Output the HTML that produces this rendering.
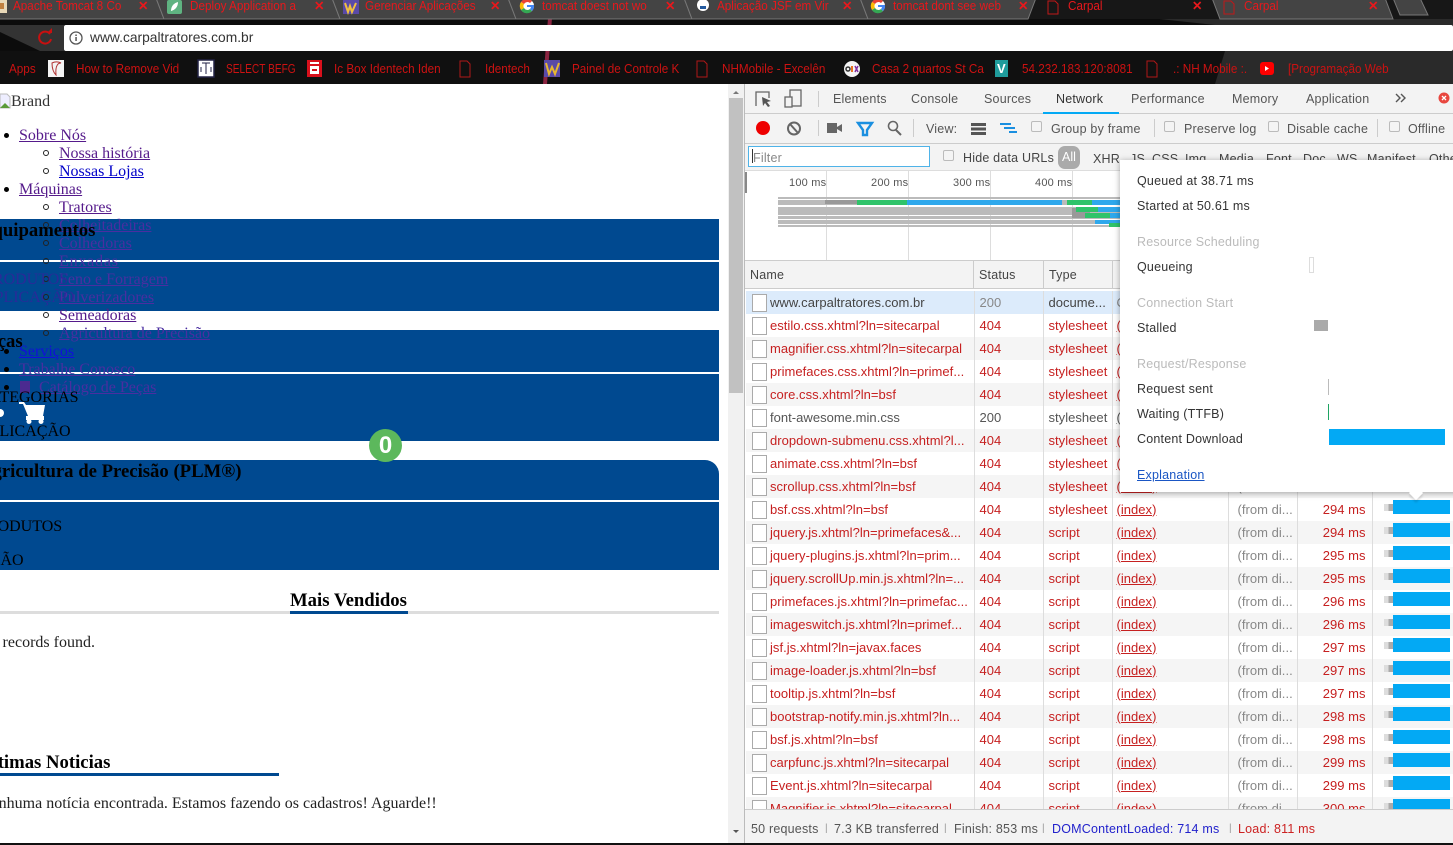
<!DOCTYPE html>
<html lang="pt"><head><meta charset="utf-8"><title>Carpal</title>
<style>
*{box-sizing:border-box}
html,body{margin:0;padding:0;width:1453px;height:845px;overflow:hidden;background:#fff}
body{position:relative;font-family:"Liberation Sans",sans-serif}
.a{position:absolute;white-space:nowrap}
.chrome{font-size:13px;color:#cc1212;line-height:16px;transform:scaleX(.9);transform-origin:left center}
.tab{color:#e8181c}
.x{font-weight:bold;transform:none;font-size:12.5px;color:#e8181c}
.s{font-family:"Liberation Serif",serif;font-size:16px;line-height:18px;color:#000}
.h{font-size:18.72px;line-height:20px;font-weight:bold}
.l{text-decoration:underline;color:#551a8b}
.dim{color:#4a2ea0}
.up{color:#2a2a98}
.band{position:absolute;left:0;width:719px;background:#004990}
.d{position:absolute;width:5px;height:5px;border-radius:50%;background:#000}
.c{position:absolute;width:6px;height:6px;border-radius:50%;border:1px solid #222}
.dt{font-size:12.5px;color:#555;line-height:16px;letter-spacing:.2px}
.cb{position:absolute;width:11px;height:11px;border:1px solid #bbb;border-radius:2px;background:#f4f4f4}
table{position:absolute;left:746px;top:291px;width:707px;border-collapse:collapse;table-layout:fixed;font-size:13px;letter-spacing:.03px;color:#c62020}
td{height:23px;padding:0 0 0 5px;white-space:nowrap;overflow:hidden;border-right:1px solid #ddd;line-height:16px}
tr:nth-child(odd){background:#f5f5f5}
tr:first-child{background:#dcebfb;color:#444}
td:first-child{padding-left:24px;position:relative}
td:first-child:before{content:"";position:absolute;left:6px;top:3px;width:13px;height:16px;border:1px solid #aaa;background:#fff}
td.i{padding-left:4px}
td.z{padding-left:9px}
.u{text-decoration:underline}
.g{color:#888}
td.t{text-align:right;padding-right:6px}
td.w{border-right:0;position:relative}
td.w i{position:absolute;left:11px;top:6px;width:9px;height:7px;background:linear-gradient(90deg,#ddd 50%,#aaa 50%)}
td.w b{position:absolute;left:20px;top:2px;width:57px;height:14px;background:#03a9f4}
.p{position:absolute;font-size:12.5px;letter-spacing:.2px;color:#333;line-height:16px;left:1137px;white-space:nowrap}
.ph{color:#bbb}
</style></head><body>

<!-- browser chrome -->
<svg class="a" style="left:0;top:0" width="1453" height="84">
<rect width="1453" height="84" fill="#0c0c0c"/>
<polygon points="0,25 64,25 64,51 40,51 0,32" fill="#333"/>
<polygon points="0,51 1453,51 1453,84 0,84" fill="#101010"/>
<polygon points="1225,51 1453,51 1453,84 1215,84" fill="#2a2a2a"/>
<polygon points="1150,18 1453,18 1453,25 1215,25" fill="#2a2a2a"/>
<polygon points="548,18 552,18 547,84 543,84" fill="#8a2440"/>
<rect width="1453" height="19" fill="#171717"/>
<g fill="#444" stroke="#777" stroke-width="1">
<polygon points="-20,-2 156,-2 164,19 -12,19"/>
<polygon points="156,-2 332,-2 340,19 164,19"/>
<polygon points="332,-2 508,-2 516,19 340,19"/>
<polygon points="508,-2 684,-2 692,19 516,19"/>
<polygon points="684,-2 860,-2 868,19 692,19"/>
<polygon points="860,-2 1036,-2 1028,19 868,19"/>
<polygon points="1212,-2 1385,-2 1393,19 1220,19"/>
<polygon points="1393,-2 1420,-2 1428,15 1400,15"/>
</g>
<!-- tab icons -->
<rect x="0" y="0" width="7" height="13" fill="#e8d8b8"/><rect x="0" y="3" width="4" height="6" fill="#c08040"/>
<rect x="167" y="0" width="15" height="14" rx="2" fill="#5fb381"/>
<path d="M171 11c0-5 3-8 7-9 0 5-3 8-7 9z" fill="#fff"/>
<rect x="343" y="0" width="16" height="14" fill="#5a4aa8"/><path d="M345 3l3 9 2-6 2 6 4-9" fill="none" stroke="#f0c040" stroke-width="2"/>
<g id="goog"><circle cx="527" cy="6" r="7" fill="#fff"/><path d="M527 -1a7 7 0 0 1 5 2l-2 2a4 4 0 0 0-6 1l-3-2a7 7 0 0 1 6-3z" fill="#ea4335"/><path d="M521 2l3 2a4 4 0 0 0 0 4l-3 2a7 7 0 0 1 0-8z" fill="#fbbc05"/><path d="M521 10l3-2a4 4 0 0 0 6 1l2 2a7 7 0 0 1-11-1z" fill="#34a853"/><path d="M527 5h7a7 7 0 0 1-2 6l-2-2a3 3 0 0 0 1-2h-4z" fill="#4285f4"/></g>
<use href="#goog" x="351"/>
<circle cx="703" cy="5" r="6" fill="#fff"/><rect x="700" y="6" width="6" height="3" fill="#235a9f"/>
<path d="M1048 1h7l3 3v10h-10zM1224 1h7l3 3v10h-10z" fill="none" stroke="#c01818"/>
<!-- reload -->
<path d="M50 34a6 6 0 1 0 1 5" fill="none" stroke="#c81010" stroke-width="2"/><path d="M47 33h5v-5z" fill="#c81010"/>
<!-- address bar -->
<rect x="64" y="25" width="1389" height="26" rx="2" fill="#fff"/>
<circle cx="76" cy="38" r="6" fill="none" stroke="#555" stroke-width="1.3"/><rect x="75.3" y="37" width="1.5" height="4" fill="#555"/><rect x="75.3" y="34.5" width="1.5" height="1.5" fill="#555"/>
<!-- bookmark icons -->
<rect x="48" y="60" width="16" height="17" fill="#f4f4f4"/><path d="M52 63c4-2 7-1 9 0-2 0-6 1-5 12-3-3-4-8-4-12z" fill="none" stroke="#b03030"/>
<rect x="198" y="60" width="16" height="17" fill="#fff" stroke="#224" stroke-width="1.5"/><path d="M202 63h8M206 63v11M201 67v5M211 67v5" stroke="#224" fill="none"/>
<rect x="307" y="60" width="15" height="17" fill="#d8101c"/><rect x="310" y="62" width="9" height="2" fill="#fff"/><rect x="310" y="66" width="9" height="8" fill="#fff"/><rect x="312" y="69" width="5" height="2" fill="#d8101c"/>
<path d="M460 61h7l3 3v13h-10zM1147 61h7l3 3v13h-10zM697 61h7l3 3v13h-10z" fill="none" stroke="#b01818"/>
<rect x="544" y="60" width="16" height="17" fill="#5a4aa8"/><path d="M546 63l3 11 3-7 3 7 4-11" fill="none" stroke="#e8b830" stroke-width="2"/>
<circle cx="852" cy="69" r="8" fill="#f4f4f4"/><circle cx="848" cy="69" r="2" fill="none" stroke="#333" stroke-width="1.5"/><path d="M852 66v6" stroke="#e87020" stroke-width="2"/><path d="M855 66l3 6M858 66l-3 6" stroke="#8030a0" stroke-width="1.5"/>
<rect x="995" y="60" width="13" height="17" fill="#1f9c9c"/>
<rect x="1260" y="62" width="14" height="13" rx="3" fill="#f00"/><path d="M1265 66l4 2.500-4 2.500z" fill="#fff"/>
</svg>
<div class="a chrome tab" style="left:13px;top:-2px">Apache Tomcat 8 Co</div>
<div class="a chrome tab" style="left:190px;top:-2px">Deploy Application a</div>
<div class="a chrome tab" style="left:365px;top:-2px">Gerenciar Aplicações</div>
<div class="a chrome tab" style="left:542px;top:-2px">tomcat doest not wo</div>
<div class="a chrome tab" style="left:717px;top:-2px">Aplicação JSF em Vir</div>
<div class="a chrome tab" style="left:893px;top:-2px">tomcat dont see web</div>
<div class="a chrome tab" style="left:1068px;top:-2px">Carpal</div>
<div class="a chrome tab" style="left:1244px;top:-2px">Carpal</div>
<div class="a chrome x" style="left:138px;top:-2px">✕</div>
<div class="a chrome x" style="left:314px;top:-2px">✕</div>
<div class="a chrome x" style="left:490px;top:-2px">✕</div>
<div class="a chrome x" style="left:665px;top:-2px">✕</div>
<div class="a chrome x" style="left:842px;top:-2px">✕</div>
<div class="a chrome x" style="left:1018px;top:-2px">✕</div>
<div class="a chrome x" style="left:1192px;top:-2px">✕</div>
<div class="a chrome x" style="left:1368px;top:-2px">✕</div>
<div class="a" style="left:90px;top:30px;font-size:13.8px;line-height:16px;color:#333">www.carpaltratores.com.br</div>
<div class="a chrome" style="left:9px;top:61px">Apps</div>
<div class="a chrome" style="left:76px;top:61px">How to Remove Vid</div>
<div class="a chrome" style="left:226px;top:61px;transform:scaleX(.78)">SELECT BEFG</div>
<div class="a chrome" style="left:334px;top:61px">Ic Box Identech Iden</div>
<div class="a chrome" style="left:485px;top:61px">Identech</div>
<div class="a chrome" style="left:572px;top:61px">Painel de Controle K</div>
<div class="a chrome" style="left:722px;top:61px">NHMobile - Excelên</div>
<div class="a chrome" style="left:872px;top:61px">Casa 2 quartos St Ca</div>
<div class="a chrome" style="left:1022px;top:61px">54.232.183.120:8081</div>
<div class="a chrome" style="left:1173px;top:61px">.: NH Mobile :.</div>
<div class="a chrome" style="left:1288px;top:61px">[Programação Web</div>
<div class="a" style="left:997px;top:61px;font-size:13px;line-height:16px;color:#fff;font-weight:bold">V</div>

<!-- page -->
<div class="a" style="left:0;top:84px;width:728px;height:759px;background:#fff"></div>
<div class="band" style="top:219px;height:41px"></div>
<div class="band" style="top:262px;height:49px"></div>
<div class="band" style="top:330px;height:42px"></div>
<div class="band" style="top:374px;height:67px"></div>
<div class="band" style="top:460px;height:40px;border-radius:0 14px 0 0"></div>
<div class="band" style="top:502px;height:68px"></div>

<svg class="a" style="left:0;top:93px" width="11" height="16"><path d="M0 1h7l3 3v11H0z" fill="#eef" stroke="#bbb"/><path d="M0 15l5-5 5 5z" fill="#5a9a3a"/></svg>
<div class="a s" style="left:11px;top:93px;color:#333">Brand</div>
<div class="d" style="left:4px;top:133px"></div><div class="a s l" style="left:19px;top:127px">Sobre Nós</div>
<div class="c" style="left:43px;top:150px"></div><div class="a s l" style="left:59px;top:145px">Nossa história</div>
<div class="c" style="left:43px;top:168px"></div><div class="a s l" style="left:59px;top:163px;color:#0000c8">Nossas Lojas</div>
<div class="d" style="left:4px;top:187px"></div><div class="a s l" style="left:19px;top:181px">Máquinas</div>
<div class="c" style="left:43px;top:204px"></div><div class="a s l" style="left:59px;top:199px">Tratores</div>
<div class="c" style="left:43px;top:222px"></div><div class="a s l dim" style="left:59px;top:217px">Colheitadeiras</div>
<div class="c" style="left:43px;top:240px"></div><div class="a s l dim" style="left:59px;top:235px">Colhedoras</div>
<div class="c" style="left:43px;top:258px"></div><div class="a s l dim" style="left:59px;top:253px;letter-spacing:.8px">Enxadas</div>
<div class="c" style="left:43px;top:276px"></div><div class="a s l dim" style="left:59px;top:271px">Feno e Forragem</div>
<div class="c" style="left:43px;top:294px"></div><div class="a s l dim" style="left:59px;top:289px">Pulverizadores</div>
<div class="c" style="left:43px;top:312px"></div><div class="a s l" style="left:59px;top:307px">Semeadoras</div>
<div class="c" style="left:43px;top:330px"></div><div class="a s l dim" style="left:59px;top:325px">Agricultura de Precisão</div>
<div class="d" style="left:4px;top:349px"></div><div class="a s l" style="left:19px;top:343px;color:#1010d8">Serviços</div>
<div class="d" style="left:4px;top:367px"></div><div class="a s l dim" style="left:19px;top:361px">Trabalhe Conosco</div>
<div class="d" style="left:4px;top:385px"></div><div class="a s l dim" style="left:39px;top:379px">Catálogo de Peças</div>
<div class="a" style="left:20px;top:381px;width:10px;height:12px;background:#4b2a90"></div>

<div class="a s h" style="left:-20px;top:221px">Equipamentos</div>
<div class="a s up" style="left:-16px;top:271px">PRODUTOS</div>
<div class="a s up" style="left:-17px;top:289px">APLICAÇÃO</div>
<div class="a s h" style="left:-22px;top:332px">Peças</div>
<div class="a s" style="left:-21px;top:389px">CATEGORIAS</div>
<div class="a s" style="left:-21px;top:423px">APLICAÇÃO</div>
<div class="a s h" style="left:-21px;top:462px">Agricultura de Precisão (PLM®)</div>
<div class="a s" style="left:-22px;top:518px">PRODUTOS</div>
<div class="a s" style="left:-68px;top:552px">APLICAÇÃO</div>
<div class="a" style="left:-4px;top:409px;width:8px;height:8px;border-radius:50%;background:#fff"></div>
<svg class="a" style="left:19px;top:401px" width="28" height="23"><path d="M0 1h5l2 3h19l-2 11H9L4 3H0z" fill="#fff"/><rect x="7" y="15" width="18" height="4" fill="#fff"/><circle cx="10" cy="20.500" r="2.500" fill="#fff"/><circle cx="22" cy="20.500" r="2.500" fill="#fff"/></svg>
<div class="a" style="left:369px;top:429px;width:33px;height:33px;border-radius:50%;background:#5cb85c;color:#fff;font:bold 24px/33px 'Liberation Sans',sans-serif;text-align:center">0</div>

<div class="a" style="left:0;top:611px;width:719px;height:3px;background:#ddd"></div>
<div class="a" style="left:290px;top:611px;width:118px;height:3px;background:#004990"></div>
<div class="a s h" style="left:290px;top:591px">Mais Vendidos</div>
<div class="a s" style="left:-21px;top:634px;color:#222">No records found.</div>
<div class="a s h" style="left:-21px;top:753px">Últimas Noticias</div>
<div class="a" style="left:0;top:773px;width:279px;height:3px;background:#004990"></div>
<div class="a s" style="left:-20px;top:795px;color:#222">Nenhuma notícia encontrada. Estamos fazendo os cadastros! Aguarde!!</div>

<!-- page scrollbar -->
<div class="a" style="left:728px;top:84px;width:16px;height:759px;background:#f1f1f1"></div>
<div class="a" style="left:729px;top:98px;width:14px;height:295px;background:#c1c1c1"></div>
<svg class="a" style="left:728px;top:84px" width="16" height="759"><path d="M5 10l3-3 3 3z" fill="#777"/><path d="M5 746l3 3 3-3z" fill="#555"/></svg>
<div class="a" style="left:744px;top:84px;width:1px;height:759px;background:#bbb"></div>

<!-- devtools -->
<div class="a" style="left:745px;top:84px;width:708px;height:759px;background:#f3f3f3"></div>
<div class="a" style="left:745px;top:113px;width:708px;height:1px;background:#ccc"></div>
<div class="a" style="left:745px;top:143px;width:708px;height:1px;background:#ccc"></div>
<div class="a" style="left:1043px;top:112px;width:76px;height:2px;background:#03a9f4"></div>
<svg class="a" style="left:745px;top:84px" width="708" height="60">
<path d="M11 22v-14h13v6" fill="none" stroke="#666" stroke-width="1.300"/><path d="M17 13l9 4-4 1 3 4-2 1-3-4-2 3z" fill="#555"/>
<rect x="45" y="6" width="11" height="16" fill="none" stroke="#666" stroke-width="1.300"/><rect x="40" y="13" width="7" height="10" fill="#f3f3f3" stroke="#666" stroke-width="1.300"/>
<path d="M73.500 7v16" stroke="#ccc"/>
<circle cx="699" cy="14" r="5.500" fill="#e8473f"/><path d="M697 12l4 4M701 12l-4 4" stroke="#fff" stroke-width="1.300"/>
<path d="M651 10l4 4-4 4M656 10l4 4-4 4" fill="none" stroke="#555" stroke-width="1.400"/>
<circle cx="18" cy="44" r="7" fill="#e00"/>
<circle cx="49" cy="44.500" r="6" fill="none" stroke="#666" stroke-width="2"/><path d="M45 40l8 9" stroke="#666" stroke-width="2"/>
<path d="M73.500 36v16" stroke="#ccc"/>
<path d="M82 39h10v10H82zM92 43l5-3v8l-5-3z" fill="#666"/>
<path d="M113 39h14l-5 7v5h-4v-5z" fill="none" stroke="#1a8fe0" stroke-width="2.400"/>
<circle cx="148" cy="42" r="4.500" fill="none" stroke="#666" stroke-width="1.600"/><path d="M151 46l5 5" stroke="#666" stroke-width="2"/>
<path d="M226 39h15v3h-15zM226 43.500h15v3h-15zM226 48h15v3h-15z" fill="#555"/>
<path d="M255 39h11v2h-11zM259 43h11v2h-11zM264 47h8v2h-8z" fill="#1a8fe0"/>
</svg>
<div class="a" style="left:1154px;top:119px;width:1px;height:18px;background:#ccc"></div>
<div class="a" style="left:1377px;top:119px;width:1px;height:18px;background:#ccc"></div>
<div class="a" style="left:913px;top:119px;width:1px;height:18px;background:#ccc"></div>
<div class="a dt" style="left:833px;top:91px">Elements</div>
<div class="a dt" style="left:911px;top:91px">Console</div>
<div class="a dt" style="left:984px;top:91px">Sources</div>
<div class="a dt" style="left:1056px;top:91px;color:#333">Network</div>
<div class="a dt" style="left:1131px;top:91px">Performance</div>
<div class="a dt" style="left:1232px;top:91px">Memory</div>
<div class="a dt" style="left:1306px;top:91px">Application</div>
<div class="a dt" style="left:926px;top:121px">View:</div>
<div class="cb" style="left:1031px;top:121px"></div><div class="a dt" style="left:1051px;top:121px">Group by frame</div>
<div class="cb" style="left:1164px;top:121px"></div><div class="a dt" style="left:1184px;top:121px">Preserve log</div>
<div class="cb" style="left:1268px;top:121px"></div><div class="a dt" style="left:1287px;top:121px">Disable cache</div>
<div class="cb" style="left:1389px;top:121px"></div><div class="a dt" style="left:1408px;top:121px">Offline</div>

<div class="a" style="left:748px;top:146px;width:182px;height:21px;background:#fff;border:1px solid #4fb3e8"></div>
<div class="a dt" style="left:753px;top:150px;color:#888">Filter</div>
<div class="a" style="left:752px;top:149px;width:1px;height:14px;background:#333"></div>
<div class="cb" style="left:943px;top:150px"></div>
<div class="a dt" style="left:963px;top:150px;color:#444">Hide data URLs</div>
<div class="a" style="left:1058px;top:146px;width:22px;height:23px;border-radius:7px;background:#aaa;color:#fff;font-size:12.5px;line-height:23px;text-align:center">All</div>
<div class="a dt" style="left:1093px;top:151px;color:#444">XHR</div>
<div class="a dt" style="left:1130px;top:151px;color:#444">JS</div>
<div class="a dt" style="left:1152px;top:151px;color:#444">CSS</div>
<div class="a dt" style="left:1185px;top:151px;color:#444">Img</div>
<div class="a dt" style="left:1219px;top:151px;color:#444">Media</div>
<div class="a dt" style="left:1266px;top:151px;color:#444">Font</div>
<div class="a dt" style="left:1303px;top:151px;color:#444">Doc</div>
<div class="a dt" style="left:1337px;top:151px;color:#444">WS</div>
<div class="a dt" style="left:1367px;top:151px;color:#444">Manifest</div>
<div class="a dt" style="left:1429px;top:151px;color:#444">Other</div>

<!-- overview -->
<div class="a" style="left:745px;top:170px;width:708px;height:90px;background:#fff;border-top:1px solid #ddd"></div>
<svg class="a" style="left:745px;top:171px" width="400" height="90">
<rect x="0" y="1" width="2" height="21" fill="#888"/>
<path d="M81.500 0v89M163.500 0v89M245.500 0v89M327.500 0v89" stroke="#ddd"/>
<rect x="33" y="26" width="345" height="2" fill="#bbb"/>
<rect x="33" y="29" width="345" height="5" fill="#bbb"/>
<rect x="80" y="29" width="32" height="4" fill="#999"/>
<rect x="112" y="29" width="50" height="5" fill="#2fc36a"/>
<rect x="162" y="29" width="155" height="5" fill="#2ea8ec"/>
<rect x="322" y="29" width="25" height="5" fill="#2fc36a"/><rect x="347" y="29" width="30" height="5" fill="#2ea8ec"/>
<rect x="33" y="36" width="345" height="8" fill="#bbb"/>
<rect x="33" y="45" width="345" height="3" fill="#bbb"/>
<rect x="33" y="49" width="345" height="4" fill="#bbb"/>
<rect x="33" y="54" width="345" height="2" fill="#bbb"/>
<rect x="327" y="37" width="18" height="10" fill="#999"/>
<rect x="331" y="36" width="22" height="5" fill="#2fc36a"/><rect x="353" y="36" width="25" height="5" fill="#2ea8ec"/>
<rect x="340" y="42" width="25" height="5" fill="#2fc36a"/><rect x="365" y="42" width="13" height="5" fill="#2ea8ec"/>
<rect x="350" y="49" width="28" height="4" fill="#2ea8ec"/>
<rect x="364" y="52" width="14" height="4" fill="#2fc36a"/>
</svg>
<div class="a dt" style="left:789px;top:175px;font-size:11px">100 ms</div>
<div class="a dt" style="left:871px;top:175px;font-size:11px">200 ms</div>
<div class="a dt" style="left:953px;top:175px;font-size:11px">300 ms</div>
<div class="a dt" style="left:1035px;top:175px;font-size:11px">400 ms</div>

<!-- table header -->
<div class="a" style="left:745px;top:260px;width:708px;height:29px;background:#f3f3f3;border-top:1px solid #ccc;border-bottom:1px solid #ccc"></div>
<div class="a" style="left:973px;top:261px;width:1px;height:27px;background:#ccc"></div>
<div class="a" style="left:1043px;top:261px;width:1px;height:27px;background:#ccc"></div>
<div class="a" style="left:1112px;top:261px;width:1px;height:27px;background:#ccc"></div>
<div class="a dt" style="left:750px;top:267px;color:#444">Name</div>
<div class="a dt" style="left:979px;top:267px;color:#444">Status</div>
<div class="a dt" style="left:1049px;top:267px;color:#444">Type</div>

<!-- requests -->
<div class="a" style="left:745px;top:289px;width:708px;height:520px;overflow:hidden;background:#fff">
<table style="left:1px;top:2px">
<colgroup><col style="width:228px"><col style="width:69px"><col style="width:69px"><col style="width:116px"><col style="width:69px"><col style="width:75px"><col></colgroup>
<tr><td>www.carpaltratores.com.br</td><td class="g">200</td><td>docume...</td><td class="i g">Other</td><td class="z g">1.2 KB</td><td class="t g">292 ms</td><td class="w"></td></tr>
<tr style="background:#fff"><td>estilo.css.xhtml?ln=sitecarpal</td><td>404</td><td>stylesheet</td><td class="i"><span class="u">(index)</span></td><td class="z g">(from di...</td><td class="t">290 ms</td><td class="w"></td></tr>
<tr><td>magnifier.css.xhtml?ln=sitecarpal</td><td>404</td><td>stylesheet</td><td class="i"><span class="u">(index)</span></td><td class="z g">(from di...</td><td class="t">290 ms</td><td class="w"></td></tr>
<tr style="background:#fff"><td>primefaces.css.xhtml?ln=primef...</td><td>404</td><td>stylesheet</td><td class="i"><span class="u">(index)</span></td><td class="z g">(from di...</td><td class="t">291 ms</td><td class="w"></td></tr>
<tr><td>core.css.xhtml?ln=bsf</td><td>404</td><td>stylesheet</td><td class="i"><span class="u">(index)</span></td><td class="z g">(from di...</td><td class="t">291 ms</td><td class="w"></td></tr>
<tr style="background:#fff;color:#555"><td>font-awesome.min.css</td><td>200</td><td>stylesheet</td><td class="i"><span class="u">(index)</span></td><td class="z g">(from di...</td><td class="t">291 ms</td><td class="w"></td></tr>
<tr><td>dropdown-submenu.css.xhtml?l...</td><td>404</td><td>stylesheet</td><td class="i"><span class="u">(index)</span></td><td class="z g">(from di...</td><td class="t">292 ms</td><td class="w"></td></tr>
<tr style="background:#fff"><td>animate.css.xhtml?ln=bsf</td><td>404</td><td>stylesheet</td><td class="i"><span class="u">(index)</span></td><td class="z g">(from di...</td><td class="t">292 ms</td><td class="w"></td></tr>
<tr><td>scrollup.css.xhtml?ln=bsf</td><td>404</td><td>stylesheet</td><td class="i"><span class="u">(index)</span></td><td class="z g">(from di...</td><td class="t">293 ms</td><td class="w"></td></tr>
<tr style="background:#fff"><td>bsf.css.xhtml?ln=bsf</td><td>404</td><td>stylesheet</td><td class="i"><span class="u">(index)</span></td><td class="z g">(from di...</td><td class="t">294 ms</td><td class="w"><i></i><b></b></td></tr>
<tr><td>jquery.js.xhtml?ln=primefaces&amp;...</td><td>404</td><td>script</td><td class="i"><span class="u">(index)</span></td><td class="z g">(from di...</td><td class="t">294 ms</td><td class="w"><i></i><b></b></td></tr>
<tr style="background:#fff"><td>jquery-plugins.js.xhtml?ln=prim...</td><td>404</td><td>script</td><td class="i"><span class="u">(index)</span></td><td class="z g">(from di...</td><td class="t">295 ms</td><td class="w"><i></i><b></b></td></tr>
<tr><td>jquery.scrollUp.min.js.xhtml?ln=...</td><td>404</td><td>script</td><td class="i"><span class="u">(index)</span></td><td class="z g">(from di...</td><td class="t">295 ms</td><td class="w"><i></i><b></b></td></tr>
<tr style="background:#fff"><td>primefaces.js.xhtml?ln=primefac...</td><td>404</td><td>script</td><td class="i"><span class="u">(index)</span></td><td class="z g">(from di...</td><td class="t">296 ms</td><td class="w"><i></i><b></b></td></tr>
<tr><td>imageswitch.js.xhtml?ln=primef...</td><td>404</td><td>script</td><td class="i"><span class="u">(index)</span></td><td class="z g">(from di...</td><td class="t">296 ms</td><td class="w"><i></i><b></b></td></tr>
<tr style="background:#fff"><td>jsf.js.xhtml?ln=javax.faces</td><td>404</td><td>script</td><td class="i"><span class="u">(index)</span></td><td class="z g">(from di...</td><td class="t">297 ms</td><td class="w"><i></i><b></b></td></tr>
<tr><td>image-loader.js.xhtml?ln=bsf</td><td>404</td><td>script</td><td class="i"><span class="u">(index)</span></td><td class="z g">(from di...</td><td class="t">297 ms</td><td class="w"><i></i><b></b></td></tr>
<tr style="background:#fff"><td>tooltip.js.xhtml?ln=bsf</td><td>404</td><td>script</td><td class="i"><span class="u">(index)</span></td><td class="z g">(from di...</td><td class="t">297 ms</td><td class="w"><i></i><b></b></td></tr>
<tr><td>bootstrap-notify.min.js.xhtml?ln...</td><td>404</td><td>script</td><td class="i"><span class="u">(index)</span></td><td class="z g">(from di...</td><td class="t">298 ms</td><td class="w"><i></i><b></b></td></tr>
<tr style="background:#fff"><td>bsf.js.xhtml?ln=bsf</td><td>404</td><td>script</td><td class="i"><span class="u">(index)</span></td><td class="z g">(from di...</td><td class="t">298 ms</td><td class="w"><i></i><b></b></td></tr>
<tr><td>carpfunc.js.xhtml?ln=sitecarpal</td><td>404</td><td>script</td><td class="i"><span class="u">(index)</span></td><td class="z g">(from di...</td><td class="t">299 ms</td><td class="w"><i></i><b></b></td></tr>
<tr style="background:#fff"><td>Event.js.xhtml?ln=sitecarpal</td><td>404</td><td>script</td><td class="i"><span class="u">(index)</span></td><td class="z g">(from di...</td><td class="t">299 ms</td><td class="w"><i></i><b></b></td></tr>
<tr><td>Magnifier.js.xhtml?ln=sitecarpal</td><td>404</td><td>script</td><td class="i"><span class="u">(index)</span></td><td class="z g">(from di...</td><td class="t">300 ms</td><td class="w"><i></i><b></b></td></tr>
</table>
</div>

<!-- status bar -->
<div class="a" style="left:745px;top:809px;width:708px;height:34px;background:#f3f3f3;border-top:1px solid #ccc"></div>
<div class="a dt" style="left:751px;top:821px">50 requests</div>
<div class="a dt" style="left:825px;top:821px;color:#999;font-size:10px">|</div>
<div class="a dt" style="left:834px;top:821px">7.3 KB transferred</div>
<div class="a dt" style="left:944px;top:821px;color:#999;font-size:10px">|</div>
<div class="a dt" style="left:954px;top:821px">Finish: 853 ms</div>
<div class="a dt" style="left:1042px;top:821px;color:#999;font-size:10px">|</div>
<div class="a dt" style="left:1052px;top:821px;color:#2222cc">DOMContentLoaded: 714 ms</div>
<div class="a dt" style="left:1229px;top:821px;color:#999;font-size:10px">|</div>
<div class="a dt" style="left:1238px;top:821px;color:#cc2222">Load: 811 ms</div>
<div class="a" style="left:0;top:843px;width:1453px;height:2px;background:#111"></div>

<!-- timing popup -->
<div class="a" style="left:1120px;top:160px;width:340px;height:332px;background:#fff;box-shadow:0 1px 6px rgba(0,0,0,.35)"></div>
<div class="a" style="left:1411px;top:488px;width:10px;height:10px;background:#fff;transform:rotate(45deg);box-shadow:2px 2px 2px rgba(0,0,0,.12)"></div>
<div class="a" style="left:1405px;top:480px;width:30px;height:12px;background:#fff"></div>
<div class="p" style="top:173px">Queued at 38.71 ms</div>
<div class="p" style="top:198px">Started at 50.61 ms</div>
<div class="p ph" style="top:234px">Resource Scheduling</div>
<div class="p" style="top:259px">Queueing</div>
<div class="a" style="left:1309px;top:257px;width:5px;height:16px;background:#fff;border:1px solid #ddd"></div>
<div class="p ph" style="top:295px">Connection Start</div>
<div class="p" style="top:320px">Stalled</div>
<div class="a" style="left:1314px;top:320px;width:14px;height:11px;background:#aaa"></div>
<div class="p ph" style="top:356px">Request/Response</div>
<div class="p" style="top:381px">Request sent</div>
<div class="a" style="left:1328px;top:379px;width:1px;height:16px;background:#bbb"></div>
<div class="p" style="top:406px">Waiting (TTFB)</div>
<div class="a" style="left:1328px;top:404px;width:1px;height:16px;background:#1fa463"></div>
<div class="p" style="top:431px">Content Download</div>
<div class="a" style="left:1329px;top:429px;width:116px;height:16px;background:#03a9f4"></div>
<div class="p" style="top:467px;color:#1a56c4;text-decoration:underline">Explanation</div>
</body></html>
